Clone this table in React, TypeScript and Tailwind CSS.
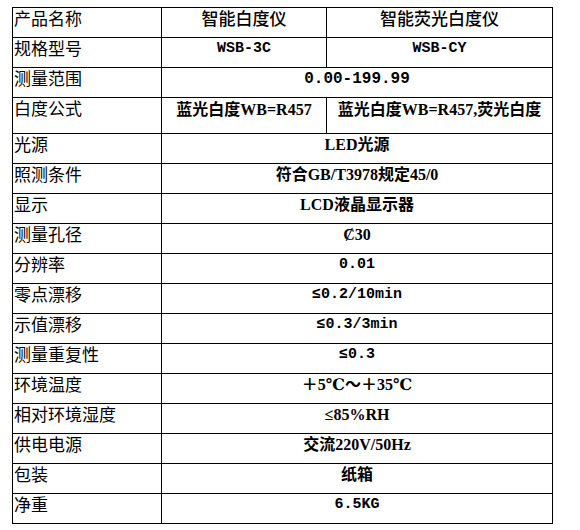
const cjk = '"Noto Sans CJK SC", sans-serif';

type Row = {
  label: string;
  values: string[];
  mono?: boolean;
  tall?: boolean;
};

const rows: Row[] = [
  { label: '规格型号', values: ['WSB-3C', 'WSB-CY'], mono: true },
  { label: '测量范围', values: ['0.00-199.99'], mono: true },
  { label: '白度公式', values: ['蓝光白度WB=R457', '蓝光白度WB=R457,荧光白度'], tall: true },
  { label: '光源', values: ['LED光源'] },
  { label: '照测条件', values: ['符合GB/T3978规定45/0'] },
  { label: '显示', values: ['LCD液晶显示器'] },
  { label: '测量孔径', values: ['Ȼ30'] },
  { label: '分辨率', values: ['0.01'], mono: true },
  { label: '零点漂移', values: ['≤0.2/10min'], mono: true },
  { label: '示值漂移', values: ['≤0.3/3min'], mono: true },
  { label: '测量重复性', values: ['≤0.3'], mono: true },
  { label: '环境温度', values: ['＋5℃～＋35℃'] },
  { label: '相对环境湿度', values: ['≤85%RH'] },
  { label: '供电电源', values: ['交流220V/50Hz'] },
  { label: '包装', values: ['纸箱'] },
  { label: '净重', values: ['6.5KG'], mono: true },
];

const labelCell = 'border border-black p-0 pl-[1px] align-top text-left text-[17px] leading-[20px] text-black';
const valueCell = 'border border-black p-0 align-top text-center leading-[22px] font-bold text-black whitespace-nowrap';

export default function App() {
  return (
    <div className="w-[580px] h-[530px] bg-white pt-[7px] pl-[12px]">
      <table className="table-fixed border-collapse w-[540px]" style={{ fontFamily: cjk }}>
        <colgroup>
          <col className="w-[149px]" />
          <col className="w-[165px]" />
          <col className="w-[226px]" />
        </colgroup>
        <tbody>
          <tr className="h-[30px]">
            <td className={labelCell}>产品名称</td>
            <td className="border border-black p-0 align-top text-center text-[17px] leading-[20px] font-medium text-black">智能白度仪</td>
            <td className="border border-black p-0 align-top text-center text-[17px] leading-[20px] font-medium text-black">智能荧光白度仪</td>
          </tr>
          {rows.map((row) => (
            <tr key={row.label} className={row.tall ? 'h-[36px]' : 'h-[30px]'}>
              <td className={labelCell}>{row.label}</td>
              {row.values.map((v) => (
                <td
                  key={v}
                  colSpan={row.values.length === 1 ? 2 : 1}
                  className={
                    valueCell +
                    (row.tall ? ' pt-[1px]' : '') +
                    (row.mono
                      ? ' font-["Liberation_Mono","Noto_Sans_CJK_SC",monospace]' +
                        (v === '0.00-199.99' ? ' text-[16px]' : ' text-[15px]')
                      : ' font-["Liberation_Serif","DejaVu_Serif","Noto_Sans_CJK_SC",serif] text-[16px]')
                  }
                >
                  {v}
                </td>
              ))}
            </tr>
          ))}
        </tbody>
      </table>
    </div>
  );
}
